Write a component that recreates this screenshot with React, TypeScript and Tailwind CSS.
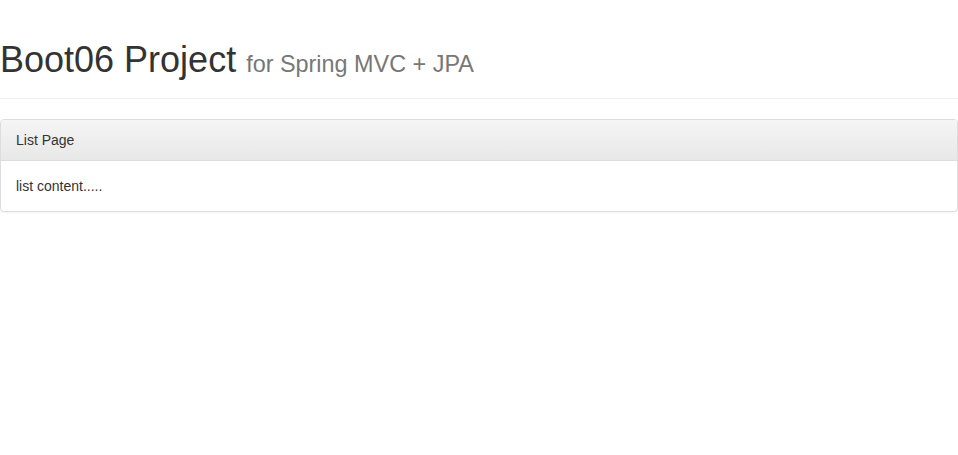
import React from 'react';

const App: React.FC = () => {
  return (
    <div
      className="min-h-[455px] bg-white text-[14px] leading-[20px] text-[#333]"
      style={{ fontFamily: '"Liberation Sans", Arial, sans-serif' }}
    >
      <div className="pt-[40px] pb-[18px] mb-[20px] border-b border-[#eee]">
        <h1 className="text-[36px] leading-[39.6px] font-normal text-[#333]">
          Boot06 Project{' '}
          <small className="text-[23.4px] leading-none font-normal text-[#777]">
            for Spring MVC + JPA
          </small>
        </h1>
      </div>

      <div className="border border-[#ddd] rounded-[4px] shadow-[0_1px_2px_rgba(0,0,0,0.05)] bg-white">
        <div className="px-[15px] py-[10px] border-b border-[#ddd] rounded-t-[3px] bg-gradient-to-b from-[#f5f5f5] to-[#e8e8e8]">
          List Page
        </div>
        <div className="p-[15px]">list content.....</div>
      </div>
    </div>
  );
};

export default App;
